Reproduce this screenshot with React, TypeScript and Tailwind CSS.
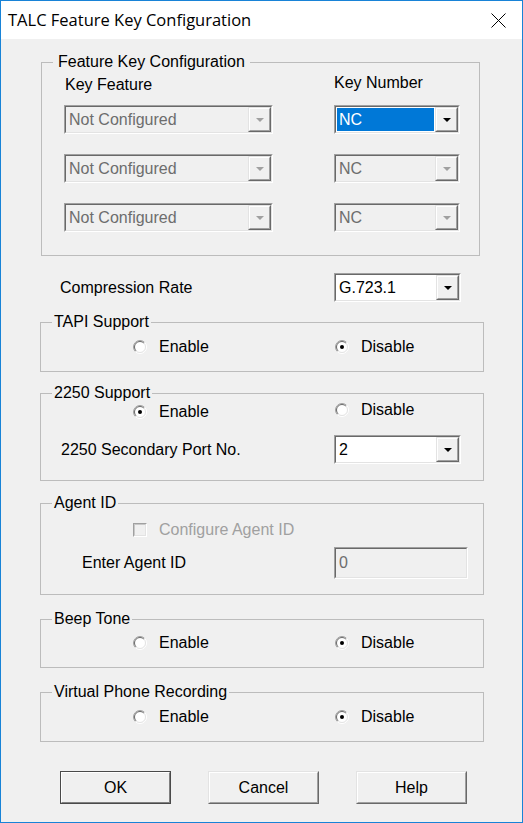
import React from "react";

// Classic Win32 dialog look: sunken fields, raised buttons, etched group boxes

function Arrow({ disabled }: { disabled?: boolean }) {
  return (
    <svg width="8" height="4" viewBox="0 0 8 4">
      <path d="M0 0 H8 L4 4 Z" fill={disabled ? "#a0a0a0" : "#000"} />
    </svg>
  );
}

interface ComboProps {
  width: string;
  value: string;
  disabled?: boolean;
  selected?: boolean;
}

const Combo: React.FC<ComboProps> = ({ width, value, disabled, selected }) => (
  <div
    className={`${width} h-[29px] border border-t-[#a0a0a0] border-l-[#a0a0a0] border-b-white border-r-white`}
  >
    <div
      className={`flex h-full border border-t-[#696969] border-l-[#696969] border-b-[#e3e3e3] border-r-[#e3e3e3] ${
        disabled ? "bg-[#f0f0f0]" : "bg-white"
      }`}
    >
      <div className="flex-1 flex items-stretch p-[1px]">
        <span
          className={`flex-1 flex items-center pl-[2px] leading-[18px] ${
            selected ? "bg-[#0078d7] text-white" : disabled ? "text-[#6d6d6d]" : "text-black"
          }`}
        >
          {value}
        </span>
      </div>
      <div className="w-[23px] border border-t-[#e3e3e3] border-l-[#e3e3e3] border-b-[#696969] border-r-[#696969]">
        <div className="h-full flex items-center justify-center bg-[#f0f0f0] border border-t-white border-l-white border-b-[#a0a0a0] border-r-[#a0a0a0]">
          <Arrow disabled={disabled} />
        </div>
      </div>
    </div>
  </div>
);

function Radio({ checked }: { checked?: boolean }) {
  return (
    <svg width="14" height="14" viewBox="0 0 14 14" className="shrink-0">
      <circle cx="7" cy="7" r="6" fill="#fff" />
      <path d="M2.4 11.6 A6.5 6.5 0 0 1 11.6 2.4" stroke="#a0a0a0" fill="none" />
      <path d="M11.6 2.4 A6.5 6.5 0 0 1 2.4 11.6" stroke="#ffffff" fill="none" />
      <path d="M3.1 10.9 A5.5 5.5 0 0 1 10.9 3.1" stroke="#696969" fill="none" />
      <path d="M10.9 3.1 A5.5 5.5 0 0 1 3.1 10.9" stroke="#e3e3e3" fill="none" />
      {checked && <circle cx="7" cy="7" r="2" fill="#000" />}
    </svg>
  );
}

function RadioItem({
  label,
  checked,
  className = "",
}: {
  label: string;
  checked?: boolean;
  className?: string;
}) {
  return (
    <div className={`flex items-center gap-[12px] leading-[18px] ${className}`}>
      <Radio checked={checked} />
      <span>{label}</span>
    </div>
  );
}

function Group({
  title,
  className = "",
  legendClass = "ml-[11px] px-[2px]",
  children,
}: {
  title: string;
  className?: string;
  legendClass?: string;
  children: React.ReactNode;
}) {
  return (
    <fieldset className={`border border-[#bcbcbc] ${className}`}>
      <legend className={`${legendClass} leading-[18px]`}>{title}</legend>
      {children}
    </fieldset>
  );
}

function Button({ label, isDefault }: { label: string; isDefault?: boolean }) {
  return (
    <div
      className={`w-[111px] h-[33px] border ${
        isDefault
          ? "border-[#4a4a4a]"
          : "border-t-[#e3e3e3] border-l-[#e3e3e3] border-b-[#696969] border-r-[#696969]"
      }`}
    >
      <div
        className={`h-full flex items-center justify-center bg-[#f0f0f0] border border-t-white border-l-white ${
          isDefault ? "border-b-[#808080] border-r-[#808080]" : "border-b-[#a0a0a0] border-r-[#a0a0a0]"
        }`}
      >
        {label}
      </div>
    </div>
  );
}

export default function App() {
  return (
    <div className="w-[523px] h-[823px] border border-[#1883d7] bg-[#f0f0f0] flex flex-col overflow-hidden text-[16px] text-black font-['Liberation_Sans',Arial,sans-serif]">
      {/* Title bar */}
      <div className="h-[38px] shrink-0 bg-white flex items-center justify-between pl-[7px] pr-[16px]">
        <span className="text-[16.5px] font-['Open_Sans','Noto_Sans',sans-serif] text-black">
          TALC Feature Key Configuration
        </span>
        <svg width="15" height="15" viewBox="0 0 15 15">
          <path d="M0.5 0.5 L14.5 14.5 M14.5 0.5 L0.5 14.5" stroke="#000" strokeWidth="1" />
        </svg>
      </div>

      <div className="flex flex-col pl-[39px]">
        {/* Feature keys */}
        <Group
          title="Feature Key Configuration"
          className="mt-[14px] ml-[1px] w-[439px] pb-[23px]"
          legendClass="ml-[11px] px-[5px]"
        >
          <div className="flex h-[34px] pl-[23px] leading-[18px]">
            <span className="w-[269px] pt-[5px]">Key Feature</span>
            <span className="pt-[3px]">Key Number</span>
          </div>
          <div className="grid grid-cols-[209px_126px] gap-x-[61px] gap-y-[20px] pl-[22px]">
            <Combo width="w-[209px]" value="Not Configured" disabled />
            <Combo width="w-[126px]" value="NC" selected />
            <Combo width="w-[209px]" value="Not Configured" disabled />
            <Combo width="w-[126px]" value="NC" disabled />
            <Combo width="w-[209px]" value="Not Configured" disabled />
            <Combo width="w-[126px]" value="NC" disabled />
          </div>
        </Group>

        {/* Compression */}
        <div className="flex items-center mt-[17px] pl-[20px]">
          <span className="w-[274px] leading-[18px]">Compression Rate</span>
          <Combo width="w-[127px]" value="G.723.1" />
        </div>

        <Group title="TAPI Support" className="mt-[11px] w-[444px] pb-[15px]">
          <div className="flex pl-[92px] pt-[6px]">
            <RadioItem label="Enable" className="w-[202px]" />
            <RadioItem label="Disable" checked className="mt-[1px]" />
          </div>
        </Group>

        <Group title="2250 Support" className="mt-[12px] w-[444px] pb-[16px]">
          <div className="flex items-start pl-[92px] pt-[1px]">
            <RadioItem label="Enable" checked className="w-[202px]" />
            <RadioItem label="Disable" className="-mt-[2px]" />
          </div>
          <div className="flex items-center mt-[14px] pl-[20px]">
            <span className="w-[273px] leading-[18px]">2250 Secondary Port No.</span>
            <Combo width="w-[127px]" value="2" />
          </div>
        </Group>

        <Group title="Agent ID" className="mt-[13px] w-[444px] pb-[15px]">
          <div className="flex items-center gap-[12px] pl-[92px] pt-[9px] leading-[18px] text-[#a0a0a0]">
            <div className="w-[14px] h-[14px] border border-t-[#a0a0a0] border-l-[#a0a0a0] border-b-white border-r-white">
              <div className="h-full border border-t-[#c8c8c8] border-l-[#c8c8c8] border-b-[#e3e3e3] border-r-[#e3e3e3] bg-[#f0f0f0]" />
            </div>
            <span>Configure Agent ID</span>
          </div>
          <div className="flex items-center mt-[8px] pl-[41px]">
            <span className="w-[252px] leading-[18px]">Enter Agent ID</span>
            <div className="w-[134px] h-[32px] border border-t-[#a0a0a0] border-l-[#a0a0a0] border-b-white border-r-white">
              <div className="h-full flex items-center pl-[3px] bg-[#f0f0f0] text-[#6d6d6d] border border-t-[#696969] border-l-[#696969] border-b-[#e3e3e3] border-r-[#e3e3e3]">
                0
              </div>
            </div>
          </div>
        </Group>

        <Group title="Beep Tone" className="mt-[15px] w-[444px] pb-[15px]">
          <div className="flex pl-[92px] pt-[6px]">
            <RadioItem label="Enable" className="w-[202px]" />
            <RadioItem label="Disable" checked />
          </div>
        </Group>

        <Group title="Virtual Phone Recording" className="mt-[15px] w-[444px] pb-[15px]">
          <div className="flex pl-[92px] pt-[7px]">
            <RadioItem label="Enable" className="w-[202px]" />
            <RadioItem label="Disable" checked />
          </div>
        </Group>

        {/* Buttons */}
        <div className="flex gap-[37px] mt-[29px] pl-[20px]">
          <Button label="OK" isDefault />
          <Button label="Cancel" />
          <Button label="Help" />
        </div>
      </div>
    </div>
  );
}
